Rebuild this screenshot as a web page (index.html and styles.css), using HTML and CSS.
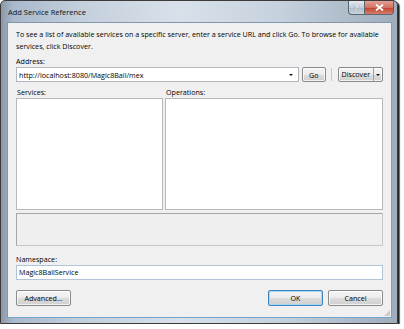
FILE: index.html
```html
<!DOCTYPE html>
<html lang="en">
<head>
  <meta charset="UTF-8" />
  <title>Add Service Reference</title>
  <link rel="stylesheet" href="styles.css">
</head>
<body>
  <div class="window">
    <div class="titlebar">
      <div class="title">Add Service Reference</div>
      <div class="caption-buttons">
        <div class="cap-btn help">?</div>
        <div class="cap-btn close">
          <svg width="9" height="7" viewBox="0 0 9 7"><path d="M1 0.5 L8 6.5 M8 0.5 L1 6.5" stroke="#fff" stroke-width="1.8"/></svg>
        </div>
      </div>
    </div>

    <div class="client">
      <p class="intro">To see a list of available services on a specific server, enter a service URL and click Go. To browse for available services, click Discover.</p>

      <div class="label">Address:</div>
      <div class="address-row">
        <div class="combo">
          <span class="combo-text">http://localhost:8080/Magic8Ball/mex</span>
          <span class="combo-arrow"></span>
        </div>
        <div class="btn go">Go</div>
        <div class="sep"></div>
        <div class="btn split">
          <span class="split-main">Discover</span>
          <span class="split-arrow"></span>
        </div>
      </div>

      <div class="lists">
        <div class="list-col services">
          <div class="label">Services:</div>
          <div class="listbox"></div>
        </div>
        <div class="list-col operations">
          <div class="label">Operations:</div>
          <div class="listbox"></div>
        </div>
      </div>

      <div class="description"></div>

      <div class="label ns-label">Namespace:</div>
      <div class="textbox">Magic8BallService</div>

      <div class="buttons">
        <div class="btn wide">Advanced...</div>
        <div class="spacer"></div>
        <div class="btn wide default">OK</div>
        <div class="btn wide">Cancel</div>
      </div>
      <div class="grip"></div>
    </div>
  </div>
</body>
</html>
```

FILE: styles.css
```css
html, body {
  margin: 0;
  padding: 0;
  background: #fff;
  font-family: "Open Sans", "Noto Sans", sans-serif;
  font-size: 7.15px;
  color: #000;
}

.window {
  width: 398px;
  height: 324px;
  box-sizing: border-box;
  display: flex;
  flex-direction: column;
  border: 1px solid #3b3b3b;
  border-radius: 5px 5px 0 0;
  box-shadow: 1px 1px 0 #222, 2px 2px 1px rgba(0, 0, 0, 0.6);
  background: linear-gradient(90deg, #8c98a6 0, #a9b9cc 3%, #c3cfdc 20%, #d8e1ea 45%, #c6d2de 70%, #9eacbc 100%);
  padding: 0 5px 5px 6px;
}

.titlebar {
  height: 21px;
  display: flex;
  align-items: flex-start;
  justify-content: space-between;
}

.title {
  padding: 6px 0 0 1px;
  font-size: 7.5px;
  color: #111;
}

.caption-buttons {
  display: flex;
  margin-right: -2px;
}

.cap-btn {
  height: 13px;
  display: flex;
  align-items: center;
  justify-content: center;
  border: 1px solid #5b6670;
  border-top: none;
}

.cap-btn.help {
  width: 15px;
  border-radius: 0 0 0 4px;
  border-right: none;
  background: linear-gradient(#e4eaf0, #c3ced9 50%, #aebccb 51%, #c8d4df);
  color: #fff;
  font-size: 8px;
  font-weight: bold;
  text-shadow: 0 0 1px #556;
}

.cap-btn.close {
  width: 28px;
  border-radius: 0 0 4px 0;
  background: linear-gradient(#e3a199, #d2715f 50%, #c0412e 51%, #d67d68);
}

.client {
  flex: 1;
  background: #f0f0f0;
  border: 1px solid #8497ab;
  border-right-color: #6ea4d0;
  border-bottom-color: #6ea4d0;
  padding: 5px 8px 0 8px;
  display: flex;
  flex-direction: column;
  position: relative;
}

.intro {
  margin: 0;
  line-height: 12px;
  padding-right: 4px;
}

.label {
  line-height: 10px;
  height: 10px;
}

.client > .label {
  margin-top: 4px;
  margin-bottom: 1px;
}

.client > .ns-label {
  margin-top: 8px;
}

.address-row {
  display: flex;
  align-items: center;
  height: 15px;
}

.combo {
  width: 278px;
  height: 13px;
  background: #fff;
  border: 1px solid #b2b6be;
  display: flex;
  align-items: center;
  justify-content: space-between;
  padding: 0 5px 0 2px;
  margin-right: 3px;
}

.combo-arrow,
.split-arrow {
  width: 0;
  height: 0;
  border-left: 2px solid transparent;
  border-right: 2px solid transparent;
  border-top: 2px solid #111;
}

.btn {
  height: 14px;
  box-sizing: border-box;
  border: 1px solid #8a8a8a;
  border-radius: 2px;
  background: linear-gradient(#f5f5f5, #ebebeb 50%, #dcdcdc 51%, #d0d0d0);
  display: flex;
  align-items: center;
  justify-content: center;
  box-shadow: inset 0 0 0 1px rgba(255, 255, 255, 0.7);
}

.btn.go {
  width: 24px;
  height: 15px;
}

.sep {
  width: 1px;
  height: 13px;
  background: #c9c9c9;
  margin: 0 6px 0 5px;
}

.btn.split {
  width: 46px;
  height: 15px;
  justify-content: space-between;
}

.split-main {
  flex: 1;
  text-align: center;
  border-right: 1px solid #a0a0a0;
  line-height: 13px;
}

.split-arrow {
  margin: 0 2px;
}

.lists {
  display: flex;
  gap: 2px;
  margin-top: 5px;
}

.list-col .label {
  margin-bottom: 1px;
  padding-left: 1px;
}

.services {
  width: 147px;
}

.operations {
  flex: 1;
}

.listbox {
  height: 110px;
  background: #fff;
  border: 1px solid #b8b8b8;
}

.description {
  height: 31px;
  margin-top: 3px;
  border: 1px solid #c8c8c8;
  border-top-color: #a6a6a6;
  border-left-color: #a6a6a6;
  background: #efefef;
}

.textbox {
  height: 13px;
  line-height: 13px;
  background: #fff;
  border: 1px solid #b2c4d8;
  padding-left: 2px;
}

.buttons {
  display: flex;
  gap: 5px;
  margin-top: 10px;
}

.spacer {
  flex: 1;
}

.btn.wide {
  width: 55px;
  height: 16px;
}

.btn.default {
  border-color: #3c84c0;
  box-shadow: inset 0 0 0 1px #a6d8f3;
}

.grip {
  position: absolute;
  right: 1px;
  bottom: 1px;
  width: 6px;
  height: 6px;
  background: radial-gradient(circle, #a0a0a0 0.6px, transparent 0.8px) 0 0 / 2px 2px;
  clip-path: polygon(100% 0, 100% 100%, 0 100%);
}
```
